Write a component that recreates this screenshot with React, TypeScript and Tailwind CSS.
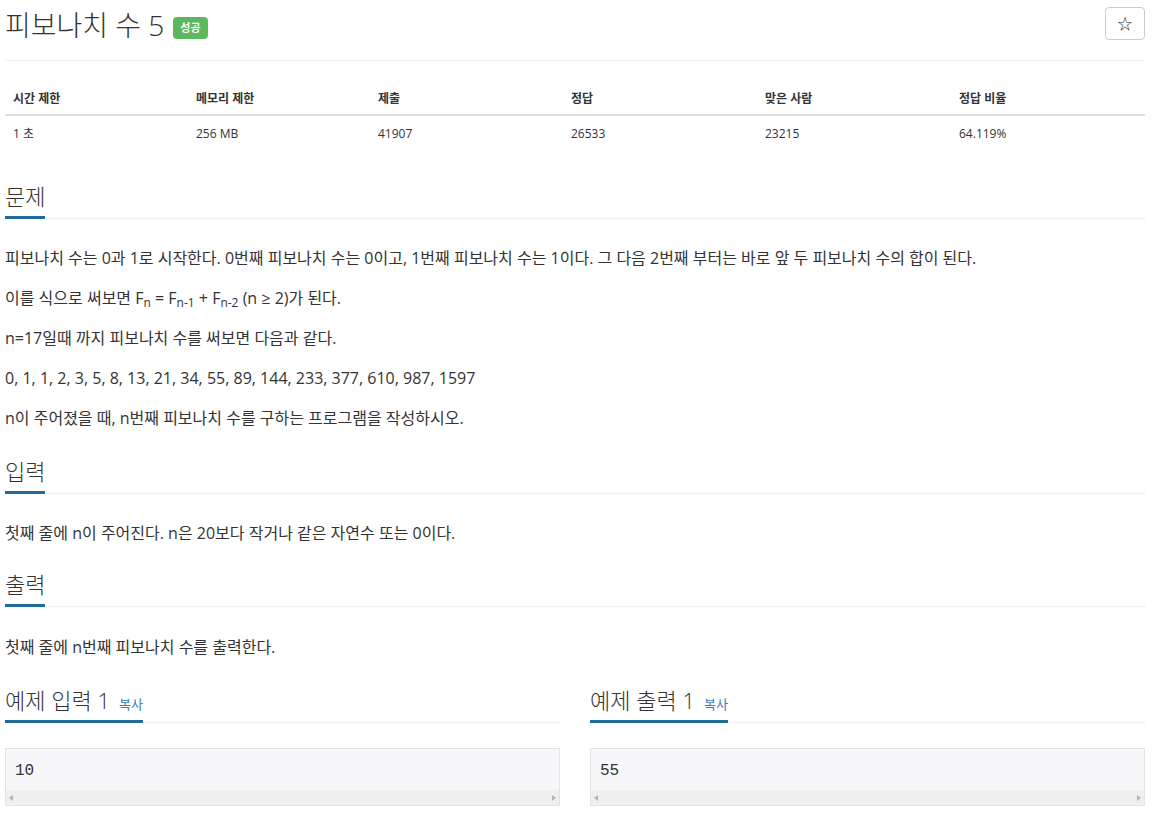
import React from 'react'

const font = { fontFamily: '"Open Sans", "Noto Sans CJK KR", sans-serif' }

const stats = [
  { label: '시간 제한', value: '1 초', w: 'w-[183px]' },
  { label: '메모리 제한', value: '256 MB', w: 'w-[182px]' },
  { label: '제출', value: '41907', w: 'w-[193px]' },
  { label: '정답', value: '26533', w: 'w-[194px]' },
  { label: '맞은 사람', value: '23215', w: 'w-[194px]' },
  { label: '정답 비율', value: '64.119%', w: 'flex-1' },
]

const SectionTitle: React.FC<{ title: string; copy?: boolean }> = ({ title, copy }) => (
  <div className="flex border-b border-dotted border-[#e5e5e5]">
    <h2
      className={`-mb-px inline-flex items-baseline gap-[9px] border-b-[3px] border-[#1f6b9b] text-[22px] font-light leading-[30px] text-[#333] ${
        copy ? 'pb-[1px]' : 'pb-[5px]'
      }`}
    >
      {title}
      {copy && <span className="text-[13px] font-normal text-[#3a79b8]">복사</span>}
    </h2>
  </div>
)

const SampleBox: React.FC<{ value: string }> = ({ value }) => (
  <div className="mt-[25px] border border-[#e3e3e3] bg-[#f7f7f9]">
    <div
      className="px-[9px] pt-[11px] pb-[8px] text-[16px] leading-[22px] text-[#333]"
      style={{ fontFamily: '"Liberation Mono", monospace' }}
    >
      {value}
    </div>
    <div className="flex h-[15px] items-center justify-between bg-[#f0f0f0] px-[3px]">
      <span className="h-0 w-0 border-y-[3px] border-r-[4px] border-y-transparent border-r-[#b5b5b5]" />
      <span className="h-0 w-0 border-y-[3px] border-l-[4px] border-y-transparent border-l-[#b5b5b5]" />
    </div>
  </div>
)

export default function App() {
  return (
    <div className="min-h-screen bg-white px-[5px] pr-[10px] text-[#333]" style={font}>
      <div className="flex h-[61px] items-start justify-between border-b border-[#eee]">
        <div className="flex items-center pt-[7px]">
          <h1 className="text-[28px] font-light leading-[36px] text-[#333]">피보나치 수 5</h1>
          <span className="ml-[9px] mt-[5px] rounded-sm bg-[#5cb85c] px-[7px] py-[3px] text-[11px] font-bold leading-[16px] text-white">
            성공
          </span>
        </div>
        <button className="mt-[7px] flex h-[33px] w-[40px] items-center justify-center rounded-sm border border-[#ccc] text-[15px] text-[#333]">
          ☆
        </button>
      </div>

      <div className="mt-[19px]">
        <div className="flex h-[36px] items-center border-b-2 border-[#ddd] pt-[3px] text-[12px] font-bold">
          {stats.map(s => (
            <div key={s.label} className={`${s.w} px-[8px]`}>
              {s.label}
            </div>
          ))}
        </div>
        <div className="flex h-[36px] items-center text-[12px]">
          {stats.map(s => (
            <div key={s.label} className={`${s.w} px-[8px]`}>
              {s.value}
            </div>
          ))}
        </div>
      </div>

      <div className="mt-[29px]">
        <SectionTitle title="문제" />
        <div className="mt-[27px] flex flex-col gap-[16px] text-[16px] leading-[24px]">
          <p>
            피보나치 수는 0과 1로 시작한다. 0번째 피보나치 수는 0이고, 1번째 피보나치 수는 1이다. 그 다음 2번째 부터는 바로 앞 두
            피보나치 수의 합이 된다.
          </p>
          <p>
            이를 식으로 써보면 F<sub>n</sub> = F<sub>n-1</sub> + F<sub>n-2</sub> (n ≥ 2)가 된다.
          </p>
          <p>n=17일때 까지 피보나치 수를 써보면 다음과 같다.</p>
          <p>0, 1, 1, 2, 3, 5, 8, 13, 21, 34, 55, 89, 144, 233, 377, 610, 987, 1597</p>
          <p>n이 주어졌을 때, n번째 피보나치 수를 구하는 프로그램을 작성하시오.</p>
        </div>
      </div>

      <div className="mt-[26px]">
        <SectionTitle title="입력" />
        <p className="mt-[27px] text-[16px] leading-[24px]">첫째 줄에 n이 주어진다. n은 20보다 작거나 같은 자연수 또는 0이다.</p>
      </div>

      <div className="mt-[24px]">
        <SectionTitle title="출력" />
        <p className="mt-[28px] text-[16px] leading-[24px]">첫째 줄에 n번째 피보나치 수를 출력한다.</p>
      </div>

      <div className="mt-[26px] grid grid-cols-2 gap-[30px]">
        <div>
          <SectionTitle title="예제 입력 1" copy />
          <SampleBox value="10" />
        </div>
        <div>
          <SectionTitle title="예제 출력 1" copy />
          <SampleBox value="55" />
        </div>
      </div>
    </div>
  )
}
